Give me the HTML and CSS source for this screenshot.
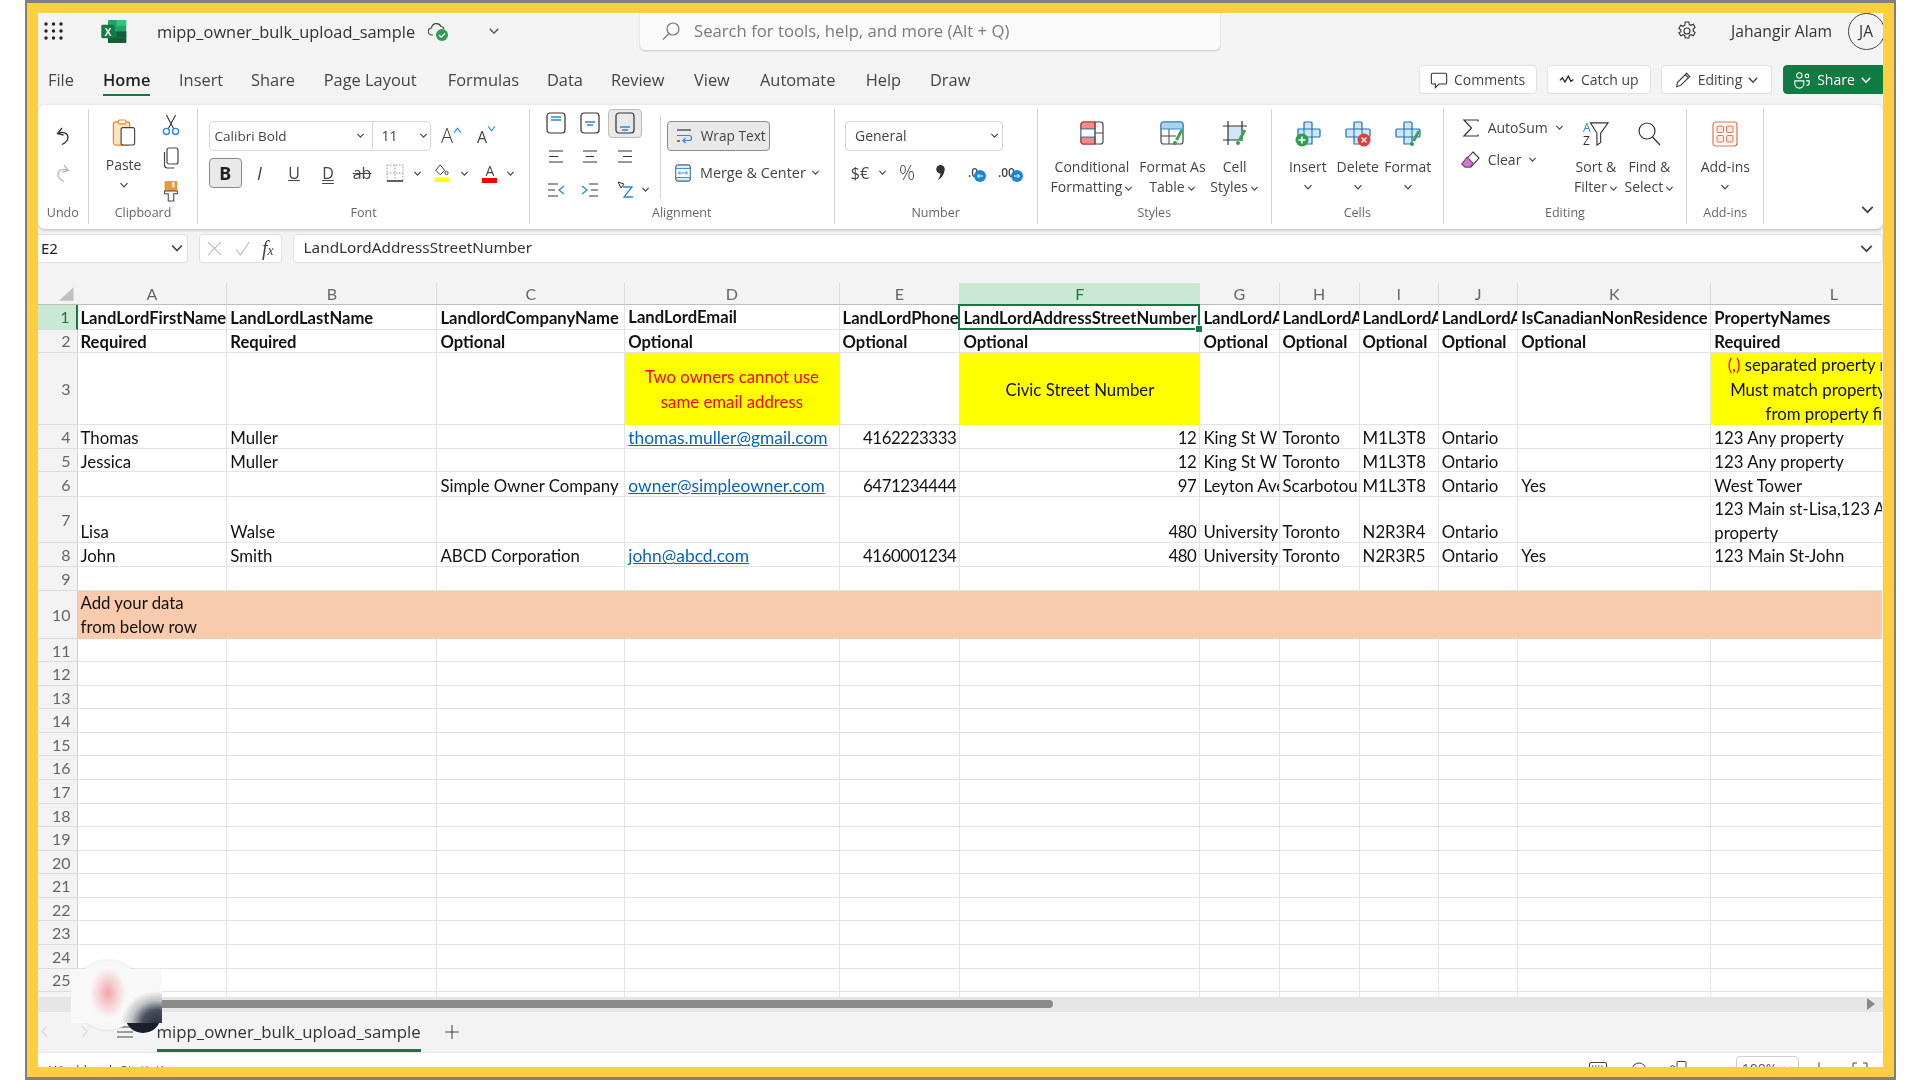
FILE: index.html
```html
<!DOCTYPE html>
<html lang="en">
<head>
<meta charset="utf-8">
<title>mipp_owner_bulk_upload_sample</title>
<link rel="stylesheet" href="styles.css">
</head>
<body>
<svg class="sprite" aria-hidden="true">
  <symbol id="chev" viewBox="0 0 10 10"><path d="M1.5 3.2 5 6.8 8.5 3.2" fill="none" stroke="currentColor" stroke-width="1.2"/></symbol>
  <symbol id="pen" viewBox="0 0 12 16"><path d="M10 1 4.5 11" stroke="#3aa655" stroke-width="3" fill="none"/><circle cx="3" cy="14" r="2" fill="#2e9e4f"/></symbol>
</svg>
<div class="frame"><div class="band"><div class="app">

  <header class="titlebar">
    <div class="tb-left">
      <svg class="waffle" viewBox="0 0 19 18"><g fill="#222"><circle cx="2" cy="2" r="1.7"/><circle cx="9.5" cy="2" r="1.7"/><circle cx="17" cy="2" r="1.7"/><circle cx="2" cy="9" r="1.7"/><circle cx="9.5" cy="9" r="1.7"/><circle cx="17" cy="9" r="1.7"/><circle cx="2" cy="16" r="1.7"/><circle cx="9.5" cy="16" r="1.7"/><circle cx="17" cy="16" r="1.7"/></g></svg>
      <svg class="xl" viewBox="0 0 26 24"><rect x="7" y="0" width="19" height="24" rx="1.5" fill="#21a366"/><rect x="16" y="0" width="10" height="6" fill="#33c481"/><rect x="7" y="12" width="19" height="6" fill="#107c41"/><rect x="16" y="12" width="10" height="6" fill="#185c37"/><rect x="7" y="18" width="19" height="6" fill="#185c37"/><rect x="0" y="5" width="14" height="14" rx="1.5" fill="#107c41"/><text x="7" y="16.5" class="xl-x">X</text></svg>
      <span class="doc-name">mipp_owner_bulk_upload_sample</span>
      <svg class="cloud" viewBox="0 0 20 19"><path d="M5 13H4a3.5 3.5 0 0 1-.5-7A5 5 0 0 1 13 4.500a3.500 3.500 0 0 1 3 2.500" fill="none" stroke="#444" stroke-width="1.200"/><circle cx="14" cy="13" r="6" fill="#2e9e4f"/><path d="M11 13l2.200 2.200 4-4" fill="none" stroke="#fff" stroke-width="1.300"/></svg>
      <svg class="ch ch-doc"><use href="#chev"/></svg>
    </div>
    <div class="search">
      <svg class="search-ic" viewBox="0 0 20 20"><circle cx="12" cy="8" r="6" fill="none" stroke="#777" stroke-width="1.200"/><path d="M8 12.500 2 18.500" stroke="#777" stroke-width="1.200"/></svg>
      <span>Search for tools, help, and more (Alt + Q)</span>
    </div>
    <div class="tb-right">
      <svg class="gear" viewBox="0 0 20 20"><circle cx="10" cy="10" r="3" fill="none" stroke="#333" stroke-width="1.100"/><path d="M8.200 1h3.600l.5 2.500 1.700.8 2.300-1 1.800 3.100-1.900 1.700v1.800l1.900 1.700-1.800 3.100-2.300-1-1.700.8-.5 2.500H8.200l-.5-2.500-1.700-.8-2.300 1-1.800-3.100L3.800 10.900V9.100L1.900 7.400l1.800-3.100 2.300 1 1.700-.8z" fill="none" stroke="#333" stroke-width="1.100"/></svg>
      <span class="user">Jahangir Alam</span>
      <span class="avatar">JA</span>
    </div>
  </header>

  <nav class="menubar">
    <div class="tabs">
      <span>File</span><span class="active"><b>Home</b></span><span>Insert</span><span>Share</span><span>Page Layout</span><span>Formulas</span><span>Data</span><span>Review</span><span>View</span><span>Automate</span><span>Help</span><span>Draw</span>
    </div>
    <div class="actions">
      <button class="act act-com"><svg viewBox="0 0 20 20"><path d="M3 2.500h14a1.500 1.500 0 0 1 1.500 1.500v9a1.500 1.500 0 0 1-1.500 1.500H10L6 18.500v-4H3A1.500 1.500 0 0 1 1.500 13V4A1.500 1.500 0 0 1 3 2.500z" fill="none" stroke="#333" stroke-width="1.200"/></svg>Comments</button>
      <button class="act act-cat"><svg viewBox="0 0 20 12"><path d="M1 7l3-3 3 5 4-7 3 6 3-2" fill="none" stroke="#222" stroke-width="1.500"/></svg>Catch up</button>
      <button class="act act-edi"><svg viewBox="0 0 20 20"><path d="M3 17.500l1-5L14 2.500l3.500 3.500-10 10z M12.500 4l3.500 3.500" fill="none" stroke="#333" stroke-width="1.200"/></svg>Editing<svg class="ch ch-act"><use href="#chev"/></svg></button>
      <button class="act act-sha"><svg viewBox="0 0 20 20"><circle cx="7" cy="5" r="3" fill="none" stroke="#fff" stroke-width="1.200"/><path d="M2 11h10v3a5 5 0 0 1-10 0z" fill="none" stroke="#fff" stroke-width="1.200"/><circle cx="15.500" cy="5.500" r="2" fill="none" stroke="#fff" stroke-width="1.200"/><path d="M14.500 11H18v2a3 3 0 0 1-3 3" fill="none" stroke="#fff" stroke-width="1.200"/></svg>Share<svg class="ch ch-act"><use href="#chev"/></svg></button>
    </div>
  </nav>

  <section class="ribbon">
    <div class="group g-undo">
      <div class="g-body undo-body">
        <svg class="ic20" viewBox="0 0 20 20"><path d="M9 2 4.500 7.500l6 1.500M4.500 7.500C10 5 15 7 15 11.500c0 3.500-3 5.500-6 7" fill="none" stroke="#333" stroke-width="1.300"/></svg>
        <svg class="ic20" viewBox="0 0 20 20"><path d="M11 2l4.500 5.500-6 1.500M15.500 7.500C10 5 5 7 5 11.500c0 3.500 3 5.500 6 7" fill="none" stroke="#b8b8b8" stroke-width="1.300"/></svg>
      </div>
      <div class="g-label">Undo</div>
    </div>

    <div class="group g-clip">
      <div class="g-body clip-body">
        <div class="paste">
          <svg class="ic-paste" viewBox="0 0 24 28"><rect x="1" y="3" width="17" height="24" rx="2.500" fill="#fbe3c0" stroke="#e58a2b" stroke-width="1.300"/><rect x="6" y="1" width="8" height="4" rx="1.500" fill="#fff" stroke="#e58a2b" stroke-width="1.200"/><rect x="9" y="9" width="14" height="18" rx="2" fill="#fff" stroke="#444" stroke-width="1.200"/></svg>
          <span class="paste-t">Paste</span>
          <svg class="ch ch-paste"><use href="#chev"/></svg>
        </div>
        <div class="clip-tools">
          <svg class="ic20" viewBox="0 0 20 24"><path d="M5 1l8 15M15 1 7 16" stroke="#333" stroke-width="1.200" fill="none"/><circle cx="5" cy="19" r="3.300" fill="none" stroke="#2b88d8" stroke-width="1.500"/><circle cx="15" cy="19" r="3.300" fill="none" stroke="#2b88d8" stroke-width="1.500"/></svg>
          <svg class="ic20" viewBox="0 0 20 22"><rect x="6" y="1" width="11" height="16" rx="2" fill="#fff" stroke="#444" stroke-width="1.200"/><path d="M3.500 5v13a3 3 0 0 0 3 3h7" fill="none" stroke="#444" stroke-width="1.200"/></svg>
          <svg class="ic20" viewBox="0 0 20 24"><rect x="3" y="1" width="14" height="11" rx="1" fill="#e89a3c"/><rect x="11" y="2" width="3" height="6" fill="#fbe3c0"/><path d="M3 12h14v3h-4v8H7v-8H3z" fill="#fff" stroke="#444" stroke-width="1.100"/></svg>
        </div>
      </div>
      <div class="g-label">Clipboard</div>
    </div>

    <div class="group g-font">
      <div class="g-body font-body">
        <div class="font-top">
          <div class="combo font-combo">
            <span class="fname">Calibri Bold</span><svg class="ch ch-sm"><use href="#chev"/></svg>
            <span class="fsize">11</span><svg class="ch ch-sm"><use href="#chev"/></svg>
          </div>
          <span class="grow"><span class="a-big">A</span><svg class="tick" viewBox="0 0 8 6"><path d="M1 5 4 1l3 4" fill="none" stroke="#2b88d8" stroke-width="1"/></svg></span>
          <span class="shrink"><span class="a-sm">A</span><svg class="tick tick-dn" viewBox="0 0 8 6"><path d="M1 1l3 4 3-4" fill="none" stroke="#2b88d8" stroke-width="1"/></svg></span>
        </div>
        <div class="font-row">
          <span class="bold-btn">B</span>
          <span class="fs fs-i">I</span>
          <span class="fs fs-u">U</span>
          <span class="fs fs-d">D</span>
          <span class="fs fs-s">ab</span>
          <svg class="ic18 mid" viewBox="0 0 18 18"><path d="M1 1h16v16H1zM9 1v16M1 9h16" fill="none" stroke="#999" stroke-width="1" stroke-dasharray="1.500 1.500"/><path d="M1 17h16" stroke="#333" stroke-width="1.500"/></svg>
          <svg class="ch ch-sm mid"><use href="#chev"/></svg>
          <svg class="ic18 mid" viewBox="0 0 18 20"><path d="M7 1 2 7l5 5 5-5z" fill="none" stroke="#333" stroke-width="1.100"/><circle cx="14" cy="10" r="1.800" fill="none" stroke="#333"/><rect x="1" y="15" width="16" height="5" fill="#ffff00"/></svg>
          <svg class="ch ch-sm mid"><use href="#chev"/></svg>
          <span class="a-color"><span>A</span><i></i></span>
          <svg class="ch ch-sm mid"><use href="#chev"/></svg>
        </div>
      </div>
      <div class="g-label">Font</div>
    </div>

    <div class="group g-align">
      <div class="g-body align-body">
        <div class="align-grid">
          <svg class="ic20 mid" viewBox="0 0 20 22"><rect x="1" y="1" width="18" height="20" rx="3" fill="none" stroke="#333" stroke-width="1.200"/><path d="M5 5h10M5 8h10" stroke="#2b88d8" stroke-width="1.300"/></svg>
          <svg class="ic20 mid" viewBox="0 0 20 22"><rect x="1" y="1" width="18" height="20" rx="3" fill="none" stroke="#333" stroke-width="1.200"/><path d="M5 10h10M7 13h6" stroke="#2b88d8" stroke-width="1.300"/></svg>
          <span class="al-active"><svg class="ic20" viewBox="0 0 20 22"><rect x="1" y="1" width="18" height="20" rx="3" fill="none" stroke="#333" stroke-width="1.200"/><path d="M5 15h10M7 18h6" stroke="#2b88d8" stroke-width="1.300"/></svg></span>
          <i></i>
          <svg class="ic18 mid" viewBox="0 0 18 18"><path d="M2 3h14M2 8.500h9M2 14h14" stroke="#333" stroke-width="1.200"/></svg>
          <svg class="ic18 mid" viewBox="0 0 18 18"><path d="M2 3h14M5 8.500h8M2 14h14" stroke="#333" stroke-width="1.200"/></svg>
          <svg class="ic18 mid" viewBox="0 0 18 18"><path d="M2 3h14M7 8.500h9M2 14h14" stroke="#333" stroke-width="1.200"/></svg>
          <i></i>
          <svg class="ic18 mid" viewBox="0 0 18 18"><path d="M1 3h10M1 9h7M1 15h10" stroke="#333" stroke-width="1.200"/><path d="M17 5l-5 4 5 4" fill="none" stroke="#2b88d8" stroke-width="1.300"/></svg>
          <svg class="ic18 mid" viewBox="0 0 18 18"><path d="M8 3h9M10 9h7M8 15h9" stroke="#333" stroke-width="1.200"/><path d="M1 5l5 4-5 4" fill="none" stroke="#2b88d8" stroke-width="1.300"/></svg>
          <svg class="ic18 mid" viewBox="0 0 18 18"><path d="M2 1l6 2-3 4z" fill="none" stroke="#333"/><path d="M7 6h9L8 16h9" fill="none" stroke="#2b88d8" stroke-width="1.300"/></svg>
          <svg class="ch ch-sm mid"><use href="#chev"/></svg>
        </div>
        <div class="inner-sep"></div>
        <div class="align-right">
          <button class="wrap-btn"><svg class="ic18" viewBox="0 0 18 18"><path d="M2 3h14" stroke="#333" stroke-width="1.200"/><path d="M2 8.500h12a2.500 2.500 0 0 1 0 5H8m2.500-2.500L8 13.500l2.500 2.500" fill="none" stroke="#2b88d8" stroke-width="1.200"/><path d="M2 14h3" stroke="#333" stroke-width="1.200"/></svg>Wrap Text</button>
          <div class="merge"><svg class="ic18" viewBox="0 0 18 20"><rect x="1" y="1" width="16" height="18" rx="2" fill="#d8ecfa" stroke="#333" stroke-width="1.100"/><rect x="1" y="5" width="16" height="10" fill="#fff" stroke="#2b88d8"/><path d="M4 10h10M6 8l-2 2 2 2M12 8l2 2-2 2" fill="none" stroke="#2b88d8"/></svg><span>Merge &amp; Center</span><svg class="ch ch-sm"><use href="#chev"/></svg></div>
        </div>
      </div>
      <div class="g-label">Alignment</div>
    </div>

    <div class="group g-num">
      <div class="g-body num-body">
        <div class="combo num-combo"><span>General</span><svg class="ch ch-sm"><use href="#chev"/></svg></div>
        <div class="num-row">
          <span class="sym">$€</span>
          <svg class="ch ch-sm mid"><use href="#chev"/></svg>
          <span class="sym sym-pc">%</span>
          <svg class="ic14 mid" viewBox="0 0 12 16"><circle cx="6" cy="5" r="4" fill="#333"/><path d="M9.500 6C9.500 10 7 13 3.500 15 5.500 12 6 10 6 8z" fill="#333"/></svg>
          <span class="dec"><span>.0</span><svg viewBox="0 0 12 12"><circle cx="6" cy="6" r="6" fill="#1a86d9"/><path d="M9 6H3.500m2-2-2 2 2 2" fill="none" stroke="#fff"/></svg></span>
          <span class="dec"><span>.00</span><svg viewBox="0 0 12 12"><circle cx="6" cy="6" r="6" fill="#1a86d9"/><path d="M3 6h5.500m-2-2 2 2-2 2" fill="none" stroke="#fff"/></svg></span>
        </div>
      </div>
      <div class="g-label">Number</div>
    </div>

    <div class="group g-sty">
      <div class="g-body sty-body">
        <div class="big">
          <svg class="ic24" viewBox="0 0 24 24"><rect x="1" y="1" width="22" height="22" rx="2.500" fill="#fff" stroke="#444" stroke-width="1.200"/><path d="M1 3.500A2.500 2.500 0 0 1 3.500 1H15v7H1zM1 16h14v7H3.500A2.500 2.500 0 0 1 1 20.500z" fill="#f58a8a" stroke="#d13438" stroke-width="1.200"/><path d="M1 8h14v8H1z" fill="#fff" stroke="#2b88d8"/><path d="M15 1v22M15 12h8" stroke="#444"/></svg>
          <span>Conditional</span>
          <span>Formatting<svg class="ch ch-in"><use href="#chev"/></svg></span>
        </div>
        <div class="big">
          <svg class="ic24" viewBox="0 0 24 24"><rect x="1" y="1" width="22" height="22" rx="2.500" fill="none" stroke="#444" stroke-width="1.200"/><path d="M1 3.500A2.500 2.500 0 0 1 3.500 1h17A2.500 2.500 0 0 1 23 3.500V8H1z" fill="#a9d3f2" stroke="#2b88d8"/><path d="M1 15h15M9 8v15" stroke="#444"/><use href="#pen" x="12" y="8" width="12" height="16"/></svg>
          <span>Format As</span>
          <span>Table<svg class="ch ch-in"><use href="#chev"/></svg></span>
        </div>
        <div class="big">
          <svg class="ic24" viewBox="0 0 24 24"><rect x="5" y="5" width="14" height="14" fill="#cfe6f8"/><path d="M5 0v24M19 0v20M0 5h24M0 19h18" stroke="#333" stroke-width="1.200"/><use href="#pen" x="12" y="8" width="12" height="16"/></svg>
          <span>Cell</span>
          <span>Styles<svg class="ch ch-in"><use href="#chev"/></svg></span>
        </div>
      </div>
      <div class="g-label">Styles</div>
    </div>

    <div class="group g-cells">
      <div class="g-body cells-body">
        <div class="big">
          <svg class="ic26" viewBox="0 0 26 26"><path d="M9 2a1 1 0 0 1 1-1h6a1 1 0 0 1 1 1v6h7a1 1 0 0 1 1 1v6a1 1 0 0 1-1 1h-7v7H9v-7H3V8h6z" fill="#cfe6f8" stroke="#1f6fb5" stroke-width="1.200"/><path d="M9 8h8v8H9z" fill="none" stroke="#1f6fb5"/><circle cx="7" cy="19" r="6.500" fill="#2e9e4f"/><path d="M7 15.500v7M3.500 19h7" stroke="#fff" stroke-width="1.500"/></svg>
          <span>Insert</span>
          <svg class="ch ch-big"><use href="#chev"/></svg>
        </div>
        <div class="big">
          <svg class="ic26" viewBox="0 0 26 26"><path d="M9 2a1 1 0 0 1 1-1h6a1 1 0 0 1 1 1v6h7a1 1 0 0 1 1 1v6a1 1 0 0 1-1 1h-7v7H9v-7H2a1 1 0 0 1-1-1V9a1 1 0 0 1 1-1h7z" fill="#cfe6f8" stroke="#1f6fb5" stroke-width="1.200"/><path d="M9 8h8v8H9z" fill="none" stroke="#1f6fb5"/><circle cx="19" cy="19" r="6.500" fill="#e03c3c"/><path d="M16.500 16.500l5 5M21.500 16.500l-5 5" stroke="#fff" stroke-width="1.400"/></svg>
          <span>Delete</span>
          <svg class="ch ch-big"><use href="#chev"/></svg>
        </div>
        <div class="big">
          <svg class="ic26" viewBox="0 0 26 26"><path d="M9 2a1 1 0 0 1 1-1h6a1 1 0 0 1 1 1v6h7a1 1 0 0 1 1 1v6a1 1 0 0 1-1 1h-7v7H9v-7H2a1 1 0 0 1-1-1V9a1 1 0 0 1 1-1h7z" fill="#cfe6f8" stroke="#1f6fb5" stroke-width="1.200"/><path d="M9 8h8v8H9z" fill="none" stroke="#1f6fb5"/><use href="#pen" x="14" y="9" width="12" height="16"/></svg>
          <span>Format</span>
          <svg class="ch ch-big"><use href="#chev"/></svg>
        </div>
      </div>
      <div class="g-label">Cells</div>
    </div>

    <div class="group g-edit">
      <div class="g-body edit-body">
        <div class="edit-left">
          <div class="edit-line"><svg class="ic20" viewBox="0 0 20 20"><path d="M17 3.500V2H3l7.500 8L3 18h14v-1.500" fill="none" stroke="#333" stroke-width="1.200"/></svg><span>AutoSum</span><svg class="ch ch-sm"><use href="#chev"/></svg></div>
          <div class="edit-line"><svg class="ic20" viewBox="0 0 20 20"><path d="M12 2l6 6-8 9H4l-3-3z" fill="#fff" stroke="#333" stroke-width="1.100"/><path d="M6 7l6 6-3 4H4l-3-3z" fill="#c77dcb" stroke="#8e3f93" stroke-width="1.100"/></svg><span>Clear</span><svg class="ch ch-sm"><use href="#chev"/></svg></div>
        </div>
        <div class="big">
          <svg class="ic26" viewBox="0 0 28 26"><text x="0" y="11" class="az az-a">A</text><text x="0" y="25" class="az">Z</text><path d="M8 1h19l-8 11v10l-4 3V12z" fill="none" stroke="#333" stroke-width="1.200"/></svg>
          <span>Sort &amp;</span>
          <span>Filter<svg class="ch ch-in"><use href="#chev"/></svg></span>
        </div>
        <div class="big">
          <svg class="ic26" viewBox="0 0 26 26"><circle cx="11" cy="10" r="8" fill="none" stroke="#333" stroke-width="1.200"/><path d="M16.500 16 24 24" stroke="#333" stroke-width="1.200"/></svg>
          <span>Find &amp;</span>
          <span>Select<svg class="ch ch-in"><use href="#chev"/></svg></span>
        </div>
      </div>
      <div class="g-label">Editing</div>
    </div>

    <div class="group g-add">
      <div class="g-body add-body">
        <div class="big">
          <svg class="ic26" viewBox="0 0 26 26"><rect x="1" y="1" width="24" height="24" rx="3" fill="none" stroke="#e8704a" stroke-width="1.200"/><g fill="#fde8e0" stroke="#e8704a"><rect x="5" y="5" width="6.500" height="6.500" rx="1"/><rect x="14.500" y="5" width="6.500" height="6.500" rx="1"/><rect x="5" y="14.500" width="6.500" height="6.500" rx="1"/><rect x="14.500" y="14.500" width="6.500" height="6.500" rx="1"/></g></svg>
          <span>Add-ins</span>
          <svg class="ch ch-big"><use href="#chev"/></svg>
        </div>
      </div>
      <div class="g-label">Add-ins</div>
    </div>

    <div class="collapse"><svg class="ch ch-col"><use href="#chev"/></svg></div>
  </section>

  <div class="formula">
    <div class="namebox"><span>E2</span><svg class="ch ch-name"><use href="#chev"/></svg></div>
    <div class="fx-box">
      <svg viewBox="0 0 16 16"><path d="M1 1l14 14M15 1 1 15" stroke="#bbb" stroke-width="1.200"/></svg>
      <svg viewBox="0 0 16 16"><path d="M1 9l5 6L15 1" fill="none" stroke="#bbb" stroke-width="1.200"/></svg>
      <span class="fx">f<small>x</small></span>
    </div>
    <div class="fx-input"><span>LandLordAddressStreetNumber</span><svg class="ch ch-col"><use href="#chev"/></svg></div>
  </div>

  <div class="sheet">
    <div class="grid">
      <div class="corner"><svg viewBox="0 0 15 14"><path d="M15 0v14H0z" fill="#bfbfbf"/></svg></div>
      <div class="ch-h">A</div><div class="ch-h">B</div><div class="ch-h">C</div><div class="ch-h">D</div><div class="ch-h">E</div><div class="ch-h sel-h">F</div><div class="ch-h">G</div><div class="ch-h">H</div><div class="ch-h">I</div><div class="ch-h">J</div><div class="ch-h">K</div><div class="ch-h">L</div>

      <div class="rh rh-sel">1</div><div class="c b">LandLordFirstName</div><div class="c b">LandLordLastName</div><div class="c b">LandlordCompanyName</div><div class="c b lift">LandLordEmail</div><div class="c b">LandLordPhone</div><div class="c b sel">LandLordAddressStreetNumber</div><div class="c b">LandLordA</div><div class="c b">LandLordA</div><div class="c b">LandLordA</div><div class="c b">LandLordA</div><div class="c b">IsCanadianNonResidence</div><div class="c b">PropertyNames</div>

      <div class="rh">2</div><div class="c b">Required</div><div class="c b">Required</div><div class="c b">Optional</div><div class="c b">Optional</div><div class="c b">Optional</div><div class="c b">Optional</div><div class="c b">Optional</div><div class="c b">Optional</div><div class="c b">Optional</div><div class="c b">Optional</div><div class="c b">Optional</div><div class="c b">Required</div>

      <div class="rh">3</div><div class="c"></div><div class="c"></div><div class="c"></div><div class="c y mid-c red">Two owners cannot use<br>same email address</div><div class="c"></div><div class="c y mid-c">Civic Street Number</div><div class="c"></div><div class="c"></div><div class="c"></div><div class="c"></div><div class="c"></div><div class="c y mid-c"><span><span class="red">(,)</span> separated proerty names&nbsp;&nbsp;&nbsp;<br>Must match property names<br>from property files</span></div>

      <div class="rh">4</div><div class="c">Thomas</div><div class="c">Muller</div><div class="c"></div><div class="c"><a href="#">thomas.muller@gmail.com</a></div><div class="c r">4162223333</div><div class="c r">12</div><div class="c">King St W</div><div class="c">Toronto</div><div class="c">M1L3T8</div><div class="c">Ontario</div><div class="c"></div><div class="c">123 Any property</div>

      <div class="rh">5</div><div class="c">Jessica</div><div class="c">Muller</div><div class="c"></div><div class="c"></div><div class="c"></div><div class="c r">12</div><div class="c">King St W</div><div class="c">Toronto</div><div class="c">M1L3T8</div><div class="c">Ontario</div><div class="c"></div><div class="c">123 Any property</div>

      <div class="rh">6</div><div class="c"></div><div class="c"></div><div class="c">Simple Owner Company</div><div class="c"><a href="#">owner@simpleowner.com</a></div><div class="c r">6471234444</div><div class="c r">97</div><div class="c">Leyton Ave</div><div class="c">Scarbotou</div><div class="c">M1L3T8</div><div class="c">Ontario</div><div class="c">Yes</div><div class="c">West Tower</div>

      <div class="rh">7</div><div class="c e">Lisa</div><div class="c e">Walse</div><div class="c"></div><div class="c"></div><div class="c"></div><div class="c r e">480</div><div class="c e">University</div><div class="c e">Toronto</div><div class="c e">N2R3R4</div><div class="c e">Ontario</div><div class="c"></div><div class="c lines">123 Main st-Lisa,123 A<br>property</div>

      <div class="rh">8</div><div class="c">John</div><div class="c">Smith</div><div class="c">ABCD Corporation</div><div class="c"><a href="#">john@abcd.com</a></div><div class="c r">4160001234</div><div class="c r">480</div><div class="c">University</div><div class="c">Toronto</div><div class="c">N2R3R5</div><div class="c">Ontario</div><div class="c">Yes</div><div class="c">123 Main St-John</div>

      <div class="rh">9</div><div class="c"></div><div class="c"></div><div class="c"></div><div class="c"></div><div class="c"></div><div class="c"></div><div class="c"></div><div class="c"></div><div class="c"></div><div class="c"></div><div class="c"></div><div class="c"></div>

      <div class="rh">10</div><div class="c s lines">Add your data<br>from below row</div><div class="c s"></div><div class="c s"></div><div class="c s"></div><div class="c s"></div><div class="c s"></div><div class="c s"></div><div class="c s"></div><div class="c s"></div><div class="c s"></div><div class="c s"></div><div class="c s"></div>

      <div class="rh">11</div><div class="c"></div><div class="c"></div><div class="c"></div><div class="c"></div><div class="c"></div><div class="c"></div><div class="c"></div><div class="c"></div><div class="c"></div><div class="c"></div><div class="c"></div><div class="c"></div>
      <div class="rh">12</div><div class="c"></div><div class="c"></div><div class="c"></div><div class="c"></div><div class="c"></div><div class="c"></div><div class="c"></div><div class="c"></div><div class="c"></div><div class="c"></div><div class="c"></div><div class="c"></div>
      <div class="rh">13</div><div class="c"></div><div class="c"></div><div class="c"></div><div class="c"></div><div class="c"></div><div class="c"></div><div class="c"></div><div class="c"></div><div class="c"></div><div class="c"></div><div class="c"></div><div class="c"></div>
      <div class="rh">14</div><div class="c"></div><div class="c"></div><div class="c"></div><div class="c"></div><div class="c"></div><div class="c"></div><div class="c"></div><div class="c"></div><div class="c"></div><div class="c"></div><div class="c"></div><div class="c"></div>
      <div class="rh">15</div><div class="c"></div><div class="c"></div><div class="c"></div><div class="c"></div><div class="c"></div><div class="c"></div><div class="c"></div><div class="c"></div><div class="c"></div><div class="c"></div><div class="c"></div><div class="c"></div>
      <div class="rh">16</div><div class="c"></div><div class="c"></div><div class="c"></div><div class="c"></div><div class="c"></div><div class="c"></div><div class="c"></div><div class="c"></div><div class="c"></div><div class="c"></div><div class="c"></div><div class="c"></div>
      <div class="rh">17</div><div class="c"></div><div class="c"></div><div class="c"></div><div class="c"></div><div class="c"></div><div class="c"></div><div class="c"></div><div class="c"></div><div class="c"></div><div class="c"></div><div class="c"></div><div class="c"></div>
      <div class="rh">18</div><div class="c"></div><div class="c"></div><div class="c"></div><div class="c"></div><div class="c"></div><div class="c"></div><div class="c"></div><div class="c"></div><div class="c"></div><div class="c"></div><div class="c"></div><div class="c"></div>
      <div class="rh">19</div><div class="c"></div><div class="c"></div><div class="c"></div><div class="c"></div><div class="c"></div><div class="c"></div><div class="c"></div><div class="c"></div><div class="c"></div><div class="c"></div><div class="c"></div><div class="c"></div>
      <div class="rh">20</div><div class="c"></div><div class="c"></div><div class="c"></div><div class="c"></div><div class="c"></div><div class="c"></div><div class="c"></div><div class="c"></div><div class="c"></div><div class="c"></div><div class="c"></div><div class="c"></div>
      <div class="rh">21</div><div class="c"></div><div class="c"></div><div class="c"></div><div class="c"></div><div class="c"></div><div class="c"></div><div class="c"></div><div class="c"></div><div class="c"></div><div class="c"></div><div class="c"></div><div class="c"></div>
      <div class="rh">22</div><div class="c"></div><div class="c"></div><div class="c"></div><div class="c"></div><div class="c"></div><div class="c"></div><div class="c"></div><div class="c"></div><div class="c"></div><div class="c"></div><div class="c"></div><div class="c"></div>
      <div class="rh">23</div><div class="c"></div><div class="c"></div><div class="c"></div><div class="c"></div><div class="c"></div><div class="c"></div><div class="c"></div><div class="c"></div><div class="c"></div><div class="c"></div><div class="c"></div><div class="c"></div>
      <div class="rh">24</div><div class="c"></div><div class="c"></div><div class="c"></div><div class="c"></div><div class="c"></div><div class="c"></div><div class="c"></div><div class="c"></div><div class="c"></div><div class="c"></div><div class="c"></div><div class="c"></div>
      <div class="rh">25</div><div class="c"></div><div class="c"></div><div class="c"></div><div class="c"></div><div class="c"></div><div class="c"></div><div class="c"></div><div class="c"></div><div class="c"></div><div class="c"></div><div class="c"></div><div class="c"></div>
      <div class="rh"></div><div class="c"></div><div class="c"></div><div class="c"></div><div class="c"></div><div class="c"></div><div class="c"></div><div class="c"></div><div class="c"></div><div class="c"></div><div class="c"></div><div class="c"></div><div class="c"></div>
    </div>
  </div>

  <div class="hscroll"><div class="thumb"></div><svg viewBox="0 0 8 12"><path d="M0 0l8 6-8 6z" fill="#888"/></svg></div>

  <div class="tabsbar">
    <svg class="nav" viewBox="0 0 8 14"><path d="M7 1 1 7l6 6" fill="none" stroke="#c4c4c4"/></svg>
    <svg class="nav nav-r" viewBox="0 0 8 14"><path d="M1 1l6 6-6 6" fill="none" stroke="#c4c4c4"/></svg>
    <svg class="burger" viewBox="0 0 16 12"><path d="M0 1h16M0 6h16M0 11h16" stroke="#444" stroke-width="1.100"/></svg>
    <div class="sheet-tab">mipp_owner_bulk_upload_sample</div>
    <svg class="plus" viewBox="0 0 14 14"><path d="M7 0v14M0 7h14" stroke="#444" stroke-width="1.100"/></svg>
  </div>

  <footer class="status">
    <span class="stats">Workbook Statistics</span>
    <svg class="st-kb" viewBox="0 0 18 14"><rect x=".5" y=".5" width="17" height="13" rx="1.500" fill="none" stroke="#444"/><path d="M3 4h12M3 7h12" stroke="#444" stroke-dasharray="1.500 1.500"/></svg>
    <svg class="st-help" viewBox="0 0 16 16"><circle cx="8" cy="8" r="7" fill="none" stroke="#444"/></svg>
    <svg class="st-fb" viewBox="0 0 18 16"><circle cx="3.500" cy="7" r="2.300" fill="none" stroke="#444"/><rect x="8" y=".5" width="9" height="7" rx="1" fill="none" stroke="#444"/></svg>
    <span class="zoom-box">100%<svg class="ch ch-sm"><use href="#chev"/></svg></span>
    <svg class="st-plus" viewBox="0 0 14 14"><path d="M7 0v14M0 7h14" stroke="#444"/></svg>
    <svg class="st-full" viewBox="0 0 16 16"><path d="M1 5V1h4M11 1h4v4" fill="none" stroke="#444"/></svg>
  </footer>

  <div class="fab-disc"></div>
  <div class="fab-dark"></div>
  <div class="fab-blur"></div>

</div></div></div>
</body>
</html>
```

FILE: styles.css
```css
* { box-sizing: border-box; }
html, body { margin: 0; padding: 0; height: 100%; background: #fff; overflow: hidden; }
body { font-family: "Open Sans", "Noto Sans", sans-serif; color: #333; }
button { font: inherit; color: inherit; margin: 0; padding: 0; }
.sprite { width: 0; height: 0; display: block; }

.frame { margin-left: 25px; width: 1870.500px; height: 1080px; border: solid #7f7f7f; border-width: 3px 2px; }
.band { height: 100%; border: solid #ffcf40; border-width: 10px 11.500px 10px 11px; }
.app { position: relative; height: 100%; background: #f3f3f3; overflow: hidden; display: flex; flex-direction: column; filter: blur(.35px); }

svg { display: block; flex: none; }
.ch { width: 10px; height: 10px; color: #444; }
.ch-sm { width: 9px; height: 9px; }
.mid { justify-self: center; align-self: center; }
.ic14 { width: 13px; height: 17px; }
.ic18 { width: 18px; height: 18px; }
.ic20 { width: 20px; height: 22px; }
.ic24 { width: 24px; height: 24px; }
.ic26 { width: 26px; height: 26px; }

/* title bar */
.titlebar { height: 47px; flex: none; display: flex; align-items: flex-start; }
.tb-left { width: 602px; height: 36px; display: flex; align-items: center; padding-left: 6px; }
.waffle { width: 19px; height: 18px; }
.xl { width: 25.500px; height: 23px; margin-left: 38px; }
.xl-x { font: 700 11px "Liberation Sans", sans-serif; fill: #fff; text-anchor: middle; }
.doc-name { width: 257px; margin-left: 30.500px; font-size: 16.400px; white-space: nowrap; color: #333; }
.cloud { width: 20px; height: 19px; margin-left: 14px; }
.ch-doc { width: 12px; height: 12px; margin-left: 40px; color: #555; }
.search { width: 580px; height: 37px; background: #fafafa; border-radius: 0 0 5px 5px; box-shadow: 0 1px 2px rgba(0,0,0,.18); display: flex; align-items: center; padding: 0 0 2px 21px; color: #7a7a7a; font-size: 16.700px; }
.search-ic { width: 20px; height: 20px; margin-right: 13px; }
.tb-right { flex: 1; height: 36px; display: flex; align-items: center; justify-content: flex-end; }
.gear { width: 20px; height: 20px; }
.user { margin-left: 34px; width: 100px; font-size: 15.700px; white-space: nowrap; color: #333; margin-top: -1px; }
.avatar { width: 37px; height: 37px; margin-left: 16.500px; margin-right: -2px; border: 1px solid #444; border-radius: 50%; display: flex; align-items: center; justify-content: center; font-size: 15.500px; }

/* menu */
.menubar { height: 44.700px; flex: none; display: flex; padding-left: 10px; }
.tabs { display: grid; grid-template-columns: 55px 76px 72px 72.700px 124.100px 99.200px 64px 83px 66px 105.700px 64.300px auto; align-items: center; height: 39px; font-size: 16.400px; color: #444; white-space: nowrap; }
.tabs .active { color: #222; }
.tabs .active b { display: inline-block; font-weight: 600; height: 32px; line-height: 31px; border-bottom: 2.500px solid #107c41; }
.actions { margin-left: auto; display: flex; height: 29.300px; margin-top: 5px; gap: 10.500px; }
.act { display: flex; align-items: center; justify-content: center; gap: 6px; background: #fff; border: 1px solid #e1e1e1; border-radius: 4px; font-size: 14px; color: #444; white-space: nowrap; }
.act svg { width: 18px; height: 18px; }
.act .ch-act { width: 12px; height: 12px; margin-left: -1px; }
.act-com { width: 118px; }
.act-cat { width: 103.400px; gap: 5px; }
.act-cat svg { height: 11px; width: 17px; }
.act-edi { width: 111px; }
.act-sha { width: 100px; background: #107c41; border-color: #107c41; color: #fff; border-radius: 4px 0 0 4px; }
.act-sha .ch-act { color: #fff; }

/* ribbon */
.ribbon { height: 124px; flex: none; background: #fff; border-radius: 7px; box-shadow: 0 1px 3px rgba(0,0,0,.25); display: flex; padding-top: 4.300px; font-size: 13.500px; color: #444; white-space: nowrap; }
.group { height: 114.700px; border-right: 1.500px solid #d4d4d4; display: flex; flex-direction: column; }
.g-body { height: 94px; }
.g-label { height: 20.700px; line-height: 19.400px; text-align: center; font-size: 12.500px; color: #666; }
.g-undo { width: 50.600px; }
.g-clip { width: 109.800px; }
.g-font { width: 331.400px; }
.g-align { width: 304.900px; }
.g-num { width: 202.900px; }
.g-sty { width: 234.400px; }
.g-cells { width: 171.700px; }
.g-edit { width: 243.600px; }
.g-add { width: 77.200px; }

.undo-body { display: flex; flex-direction: column; align-items: center; padding-top: 16px; gap: 15px; }

.clip-body { display: grid; grid-template-columns: 70px 25px; }
.paste { display: flex; flex-direction: column; align-items: center; padding-top: 10px; }
.ic-paste { width: 24px; height: 27px; }
.paste-t { margin-top: 9px; line-height: 20px; font-size: 14px; }
.ch-paste { margin-top: 5px; }
.clip-tools { display: flex; flex-direction: column; align-items: center; padding-top: 5px; gap: 11px; }

.font-body { padding: 12px 0 0 10.200px; }
.font-top { display: flex; align-items: center; height: 29.700px; }
.combo { display: flex; align-items: center; height: 29.700px; background: #fff; border: 1px solid #d6d6d6; border-radius: 4px; font-size: 14px; }
.font-combo { width: 222.400px; }
.fname { width: 146px; padding-left: 5px; font-size: 13.500px; }
.fsize { width: 47px; margin-left: 7px; padding-left: 4px; border-left: 1px solid #d6d6d6; line-height: 27px; padding-left: 9px; }
.grow, .shrink { display: flex; align-items: flex-start; }
.grow { margin-left: 10px; }
.shrink { margin-left: 15px; }
.a-big { font-size: 20px; line-height: 24px; font-weight: 300; }
.a-sm { font-size: 16px; line-height: 24px; padding-top: 3px; }
.tick { width: 9px; height: 7px; margin-top: 3px; }
.tick-dn { margin-top: 3px; }
.font-row { display: grid; grid-template-columns: 33.400px 35px 34px 34px 34px 32px 13px 36px 10px 35px 12px; height: 30.300px; margin-top: 7.300px; }
.bold-btn { display: flex; align-items: center; justify-content: center; font: 700 18px "Noto Sans", sans-serif; color: #222; background: #e9e9e9; border: 1px solid #8a8a8a; border-radius: 4px; }
.fs { display: flex; align-items: center; justify-content: center; font-size: 16px; color: #444; }
.fs-i { font-style: italic; font-size: 18px; }
.fs-u { text-decoration: underline; }
.fs-d { text-decoration: underline double; }
.fs-s { text-decoration: line-through; }
.a-color { display: flex; flex-direction: column; align-items: center; justify-content: center; padding-left: 5px; font-size: 14px; line-height: 15px; }
.a-color i { width: 15px; height: 5px; background: #ff0000; }

.align-body { display: flex; }
.align-grid { width: 130.200px; padding-left: 9.200px; display: grid; grid-template-columns: 34.300px 34.300px 34.400px 8px; grid-template-rows: 29px 29px 29px; row-gap: 4.200px; }
.al-active { display: flex; align-items: center; justify-content: center; background: #e9e9e9; border: 1px solid #bdbdbd; border-radius: 4px; }
.inner-sep { width: 1px; height: 84px; margin-top: 6px; background: #d8d8d8; }
.align-right { padding: 12px 0 0 5.700px; }
.wrap-btn { width: 103.700px; height: 29.700px; display: flex; align-items: center; gap: 8px; padding-left: 7px; background: #e9e9e9; border: 1px solid #8a8a8a; border-radius: 4px; font-size: 13.700px; color: #444; }
.merge { display: flex; align-items: center; height: 30px; margin-top: 7.300px; padding-left: 7.300px; gap: 8px; font-size: 14.400px; }
.merge .ch-sm { margin-left: -3px; }

.num-body { padding: 12px 0 0 10.300px; }
.num-combo { width: 158px; padding: 0 3px 0 9px; justify-content: space-between; }
.num-row { display: grid; grid-template-columns: 30px 16px 32px 36px 36px 31px; height: 30px; margin-top: 7.300px; }
.sym { display: flex; align-items: center; justify-content: center; font-size: 16px; }
.sym-pc { font-size: 20px; font-weight: 300; }
.dec { display: flex; align-items: center; justify-content: center; font-size: 12px; font-weight: 600; }
.dec svg { width: 12px; height: 12px; margin: 6px 0 0 -4px; }

.big { display: flex; flex-direction: column; align-items: center; padding-top: 12px; line-height: 20px; font-size: 14px; }
.big > svg:first-child { margin-bottom: 11.700px; }
.big span { display: flex; align-items: center; }
.ch-in { width: 9px; height: 9px; margin: 3px 0 0 2px; }
.ch-big { margin-top: 5px; }
.sty-body { display: grid; grid-template-columns: 80px 81px 43.400px; padding-left: 14.400px; }
.cells-body { display: grid; grid-template-columns: 50px 50px 50px; padding-left: 10.800px; }
.cells-body .big > .ic26, .edit-body .big > .ic26, .add-body .big > .ic26 { margin-bottom: 9.700px; }
.edit-body { display: grid; grid-template-columns: 127.300px 50px 56.800px; }
.edit-left { padding: 6.700px 0 0 17px; display: flex; flex-direction: column; gap: 8.300px; }
.edit-line { display: flex; align-items: center; height: 24px; gap: 7px; font-size: 14px; }
.az { font: 400 13px "Open Sans", sans-serif; fill: #333; }
.az-a { fill: #2b88d8; }
.add-body { display: flex; justify-content: center; }
.collapse { flex: 1; height: 114.700px; display: flex; align-items: flex-end; justify-content: flex-end; padding: 0 8px 6.500px 0; }
.ch-col { width: 15px; height: 15px; color: #444; }

/* formula */
.formula { height: 29px; flex: none; margin-top: 5.300px; display: flex; gap: 11px; }
.namebox, .fx-box, .fx-input { background: #fff; border: 1px solid #e0e0e0; display: flex; align-items: center; border-radius: 4px; }
.namebox { width: 150px; padding: 0 3px; border-left: 0; justify-content: space-between; border-radius: 0 4px 4px 0; font: 15px "Noto Sans", sans-serif; color: #222; }
.ch-name { width: 14px; height: 14px; }
.fx-box { width: 82.600px; padding-left: 7px; gap: 12.500px; }
.fx-box svg { width: 15px; height: 15px; }
.fx { font: italic 20px "Liberation Serif", serif; color: #444; }
.fx small { font-size: 14px; }
.fx-input { flex: 1; padding: 0 8px 0 10px; justify-content: space-between; font: 15.300px "Noto Sans", sans-serif; color: #333; }
.fx-input span { margin-top: -3px; }

/* sheet */
.sheet { height: 713.700px; flex: none; margin: 20px 1px 0 0; background: #fff; overflow: hidden; }
.grid { display: grid; width: 1919px; font: 16.800px/24.700px Lato, sans-serif; color: #111;
  grid-template-columns: 39.500px 149.800px 210.200px 187.800px 214.300px 120.800px 240px 79.200px 80px 79.200px 79.600px 193px 246px;
  grid-template-rows: 22px 24.700px 23px 72.600px 24px 23px 24.400px 46.600px 23.700px 23.700px 48px repeat(16, 23.570px); }
.corner { background: #f3f3f3; border-bottom: 1px solid #bdbdbd; padding: 3.700px 0 0 21px; }
.corner svg { width: 14.500px; height: 14px; }
.ch-h { background: #f3f3f3; border-right: 1px solid #dcdcdc; border-bottom: 1px solid #bdbdbd; color: #666; text-align: center; line-height: 22px; font-size: 16px; }
.sel-h { background: #c9e9d5; color: #217346; }
.rh { background: #f3f3f3; border-right: 1px solid #d0d0d0; border-bottom: 1px solid #dcdcdc; color: #666; padding: 2px 6px 0 0; display: flex; align-items: center; justify-content: flex-end; font-size: 16px; }
.rh-sel { background: #c9e9d5; color: #217346; border-right: 2px solid #107c41; }
.c { border-right: 1px solid #e4e4e4; border-bottom: 1px solid #e4e4e4; padding: 4px 3px 0; display: flex; align-items: center; white-space: nowrap; overflow: hidden; min-width: 0; }
.b { font-size: 16.600px; font-weight: 700; }
.lift { padding-top: 2px; }
.r { justify-content: flex-end; letter-spacing: -.4px; }
.e { align-items: flex-end; padding-top: 0; line-height: 21px; }
.y { background: #ffff00; border-color: #ffff00; padding-top: 3px; }
.mid-c { justify-content: center; text-align: center; }
.red { color: #ff0000; }
.s { background: #f8cbad; border-color: #f8cbad; }
.lines { align-items: flex-start; padding-top: 0; }
.c a { color: #0563c1; font-size: 17.400px; }
.sel { position: relative; overflow: visible; z-index: 2; }
.sel::before { content: ""; position: absolute; left: -2px; right: -1px; top: -1px; bottom: -1px; border: 2px solid #107c41; }
.sel::after { content: ""; position: absolute; right: -4px; bottom: -4px; width: 6px; height: 6px; background: #107c41; border: 1px solid #fff; }

.hscroll { height: 15px; flex: none; background: #e6e6e6; display: flex; align-items: center; justify-content: space-between; padding: 0 8px 0 62px; }
.thumb { width: 953px; height: 8px; background: #8a8a8a; border-radius: 4px; }
.hscroll svg { width: 8px; height: 12px; }

.tabsbar { height: 40.300px; flex: none; display: flex; align-items: center; padding-left: 3px; }
.nav { width: 7px; height: 13px; }
.nav-r { margin-left: 33px; }
.burger { width: 16px; height: 12px; margin-left: 29px; }
.sheet-tab { width: 264px; margin-left: 23.500px; height: 40px; line-height: 40px; border-bottom: 3px solid #217346; font-size: 16.800px; white-space: nowrap; color: #333; }
.plus { width: 14px; height: 14px; margin-left: 24px; }

.status { height: 30px; flex: none; background: #fff; border-top: 1px solid #e8e8e8; display: flex; align-items: flex-start; padding: 9px 0 0 11px; position: relative; font-size: 14px; color: #555; }
.stats { width: 1519.500px; line-height: 18px; }
.st-kb { width: 18px; height: 14px; margin-left: 20px; }
.st-help { width: 16px; height: 16px; margin-left: 24px; }
.st-fb { width: 18px; height: 16px; margin-left: 22px; margin-top: -1px; }
.zoom-box { width: 63px; height: 30px; margin-left: 49px; margin-top: -6px; border: 1px solid #d0d0d0; border-radius: 4px; display: flex; justify-content: center; gap: 6px; align-items: center; font-size: 14px; padding-bottom: 4px; }
.st-plus { width: 14px; height: 14px; margin-left: 13px; }
.st-full { width: 16px; height: 16px; margin-left: 26px; }

/* floating button under the redaction blur */
.fab-disc { position: absolute; left: 35px; top: 947px; width: 70px; height: 70px; border-radius: 50%; background: #f7f7f7; box-shadow: 0 0 3px rgba(0,0,0,.12); }
.fab-dark { position: absolute; left: 88px; top: 990px; width: 34px; height: 30px; border-radius: 50%; background: #1b1e2c; }
.fab-blur { position: absolute; left: 33px; top: 956px; width: 91px; height: 54px;
  background:
    radial-gradient(ellipse 18px 26px at 37px 24px, rgba(241,160,165,.95), rgba(245,190,195,.6) 55%, rgba(250,235,235,0) 100%),
    radial-gradient(ellipse 36px 32px at 86px 54px, #2c3040 0%, #4a4e5c 40%, rgba(140,145,155,.55) 70%, rgba(245,245,245,0) 100%),
    #f8f8f8; }
```
